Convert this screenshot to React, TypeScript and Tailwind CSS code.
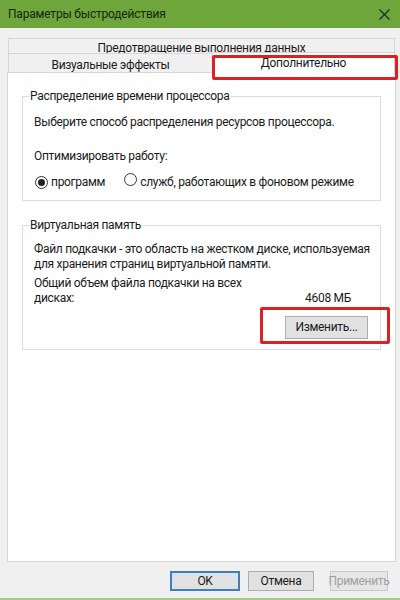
import React from "react";

const font = { fontFamily: 'Roboto, "Liberation Sans", sans-serif' };

function Radio({ checked }: { checked?: boolean }) {
  return (
    <span className="inline-flex items-center justify-center w-[13px] h-[13px] rounded-full border border-[#333] bg-white shrink-0">
      {checked && <span className="w-[7px] h-[7px] rounded-full bg-[#222]" />}
    </span>
  );
}

function Group({ title, top, height, children }: { title: string; top: string; height: string; children: React.ReactNode }) {
  return (
    <div className={`relative mx-[14px] border border-[#dcdcdc] ${top} ${height}`}>
      <span className="absolute left-[6px] top-[-9px] bg-white px-[1px] text-[12px] leading-[16px] tracking-[-0.3px] whitespace-nowrap text-[#1a1a1a]">{title}</span>
      {children}
    </div>
  );
}

export default function App() {
  return (
    <div className="relative w-[400px] h-[600px] bg-[#f0f0f0] overflow-hidden flex flex-col text-[#1a1a1a] whitespace-nowrap tracking-[-0.3px]" style={font}>
      <div className="h-[28px] bg-[#6ea63c] flex items-center justify-between pl-[8px] pr-[10px] shrink-0">
        <span className="text-[12px] tracking-[-0.2px] text-[#16240c]">Параметры быстродействия</span>
        <svg width="11" height="11" viewBox="0 0 11 11">
          <path d="M0.5 0.5L10.5 10.5M10.5 0.5L0.5 10.5" stroke="#16240c" strokeWidth="1.1" />
        </svg>
      </div>

      <div className="relative pl-[7px] pr-[4px] pt-[10px] flex flex-col">
        <div className="mx-[1px] h-[15px] border-t border-l border-r border-[#d6d6d6] bg-[#f0f0f0] flex justify-center">
          <span className="text-[12px] leading-[16px] mt-[1px]">Предотвращение выполнения данных</span>
        </div>
        <div className="flex h-[20px] mx-[1px]">
          <div className="w-[204px] border-t border-l border-[#d6d6d6] flex justify-center bg-[#f0f0f0]">
            <span className="text-[12px] leading-[16px] mt-[3px]">Визуальные эффекты</span>
          </div>
          <div className="flex-1 relative z-10 bg-white border-t border-l border-r border-[#d6d6d6] -mt-[1px] h-[22px] flex justify-center">
            <span className="text-[12px] leading-[16px] mt-[2px]">Дополнительно</span>
          </div>
        </div>

        <div className="h-[490px] -mt-[1px] bg-white border border-[#d6d6d6] flex flex-col">
          <Group title="Распределение времени процессора" top="mt-[23px]" height="h-[105px]">
            <div className="pl-[11px] pt-[17px] text-[12px] leading-[16px]">
              <div>Выберите способ распределения ресурсов процессора.</div>
              <div className="mt-[18px]">Оптимизировать работу:</div>
              <div className="mt-[9px] flex items-center">
                <span className="ml-[1px]"><Radio checked /></span>
                <span className="ml-[3px]">программ</span>
                <span className="ml-[19px]"><Radio /></span>
                <span className="ml-[3px]">служб, работающих в фоновом режиме</span>
              </div>
            </div>
          </Group>

          <Group title="Виртуальная память" top="mt-[24px]" height="h-[125px]">
            <div className="pl-[11px] pr-[29px] pt-[16px] text-[12px] leading-[15px]">
              <div>Файл подкачки - это область на жестком диске, используемая</div>
              <div>для хранения страниц виртуальной памяти.</div>
              <div className="mt-[4px] flex justify-between items-end">
                <div>
                  <div>Общий объем файла подкачки на всех</div>
                  <div>дисках:</div>
                </div>
                <div>4608 МБ</div>
              </div>
              <div className="flex justify-end mt-[10px] mr-[-17px]">
                <div className="w-[83px] h-[23px] bg-[#e1e1e1] border border-[#adadad] flex items-center justify-center">
                  <span>Изменить...</span>
                </div>
              </div>
            </div>
          </Group>
        </div>

        <div className="absolute left-[212px] top-[27px] w-[186px] h-[25px] border-[3px] border-[#dd1f26] rounded-[2px] z-20" />
      </div>

      <div className="absolute left-[260px] top-[307px] w-[130px] h-[37px] border-[3px] border-[#dd1f26] rounded-[2px] z-20" />

      <div className="flex justify-end pr-[12px] mt-[9px] text-[12px]">
        <div className="w-[70px] h-[20px] bg-[#e1e1e1] border-2 border-[#3b7fc4] flex items-center justify-center">OK</div>
        <div className="ml-[8px] w-[66px] h-[20px] bg-[#e1e1e1] border border-[#adadad] flex items-center justify-center">Отмена</div>
        <div className="ml-[16px] w-[58px] h-[20px] bg-[#e6e6e6] border border-[#c8c8c8] flex items-center justify-center text-[#a0a0a0]">Применить</div>
      </div>

      <div className="absolute left-0 bottom-0 w-full h-[2px] bg-[#a9c98b]" />
    </div>
  );
}
